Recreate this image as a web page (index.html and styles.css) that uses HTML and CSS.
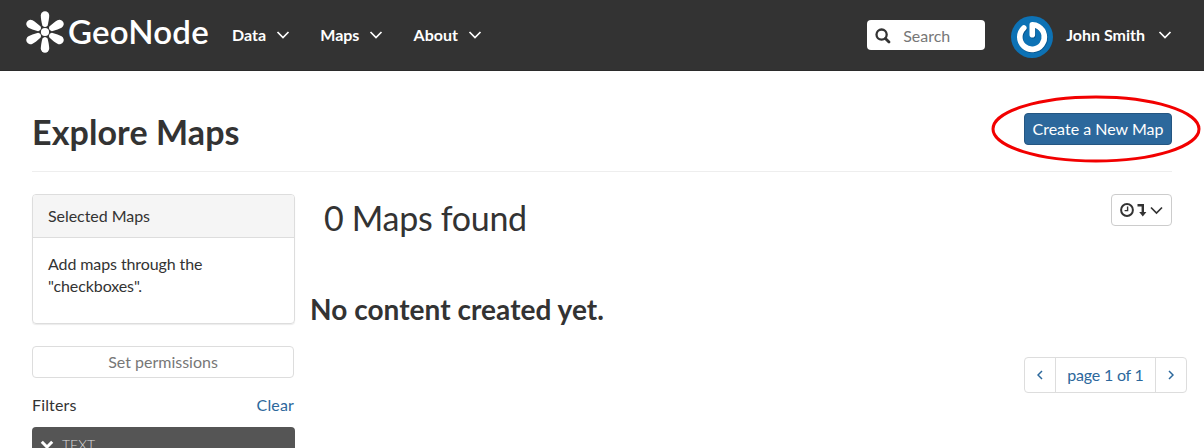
FILE: index.html
```html
<!DOCTYPE html>
<html lang="en">
<head>
<meta charset="utf-8">
<title>Explore Maps - GeoNode</title>
<link rel="stylesheet" href="styles.css">
</head>
<body>
<header class="navbar">
  <a class="brand">
    <svg class="brand-mark" width="40" height="44" viewBox="0 0 40 44" fill="#fff">
      <circle cx="20" cy="22" r="4.1"/>
      <path id="petal" d="M17.4 15.6Q15.8 9 15.8 5.4A4.2 4.2 0 0 1 24.2 5.4Q24.2 9 22.6 15.6Q20 18.6 17.4 15.6Z"/>
      <use href="#petal" transform="rotate(61 20 22)"/>
      <use href="#petal" transform="rotate(119 20 22)"/>
      <use href="#petal" transform="rotate(180 20 22)"/>
      <use href="#petal" transform="rotate(241 20 22)"/>
      <use href="#petal" transform="rotate(299 20 22)"/>
    </svg>
    <span class="brand-name">GeoNode</span>
  </a>
  <nav class="menu">
    <a class="menu-item">Data <svg class="chevron" width="14" height="8" viewBox="0 0 14 8"><path d="M1.5 1L7 6.5L12.5 1"/></svg></a>
    <a class="menu-item">Maps <svg class="chevron" width="14" height="8" viewBox="0 0 14 8"><path d="M1.5 1L7 6.5L12.5 1"/></svg></a>
    <a class="menu-item">About <svg class="chevron" width="14" height="8" viewBox="0 0 14 8"><path d="M1.5 1L7 6.5L12.5 1"/></svg></a>
  </nav>
  <div class="search">
    <svg width="16" height="16" viewBox="0 0 16 16" fill="none" stroke="#333"><circle cx="6.6" cy="6.6" r="5.1" stroke-width="2.3"/><path d="M10.4 10.4L14 14" stroke-width="2.8" stroke-linecap="round"/></svg>
    <span>Search</span>
  </div>
  <svg class="avatar" width="42" height="42" viewBox="0 0 42 42" fill="none" stroke-linecap="round" stroke-linejoin="round">
    <circle cx="21" cy="21" r="21" fill="#0d72b5"/>
    <path d="M12.8 12A12.3 12.3 0 1 0 27.5 10.6Q24.5 8.7 21.3 8.8V18.8" stroke="#07568f" stroke-width="5.6" transform="translate(.7 .9)"/>
    <path d="M12.8 12A12.3 12.3 0 1 0 27.5 10.6Q24.5 8.7 21.3 8.8V18.8" stroke="#fff" stroke-width="5.6"/>
  </svg>
  <a class="user">John Smith <svg class="chevron" width="14" height="8" viewBox="0 0 14 8"><path d="M1.5 1L7 6.5L12.5 1"/></svg></a>
</header>
<main class="page">
  <div class="page-header">
    <h1>Explore Maps</h1>
    <div class="create">
      <a class="btn-primary">Create a New Map</a>
      <svg class="highlight" width="210" height="70" viewBox="0 0 210 70"><ellipse cx="105" cy="35" rx="103" ry="32" fill="none" stroke="#f20000" stroke-width="3"/></svg>
    </div>
  </div>
  <div class="columns">
    <aside class="sidebar">
      <section class="panel">
        <div class="panel-heading">Selected Maps</div>
        <div class="panel-body">Add maps through the "checkboxes".</div>
      </section>
      <button class="permissions">Set permissions</button>
      <div class="filters"><span>Filters</span><a>Clear</a></div>
      <div class="filter-head">
        <svg width="14" height="10" viewBox="0 0 14 10"><path d="M1.8 1.8L7 7L12.2 1.8" fill="none" stroke="#fff" stroke-width="3"/></svg>
        <span>TEXT</span>
      </div>
    </aside>
    <section class="results">
      <div class="results-top">
        <h2>0 Maps found</h2>
        <a class="sort">
          <svg width="43" height="16" viewBox="0 0 43 16" fill="none" stroke="#333"><circle cx="7" cy="8" r="5.9" stroke-width="2"/><path d="M7.6 4.5V8.6H4.6" stroke-width="1.4"/><path d="M17.5 3.2H22.8V11" stroke-width="2.4"/><path d="M19.2 10H26.4L22.8 14.4Z" fill="#333" stroke="none"/><path d="M31 5.5L36.5 11L42 5.5" stroke-width="1.7"/></svg>
        </a>
      </div>
      <h3>No content created yet.</h3>
      <div class="pager">
        <a class="step"><svg width="6" height="10" viewBox="0 0 6 10"><path d="M5 1L1 5L5 9"/></svg></a>
        <a class="current">page 1 of 1</a>
        <a class="step"><svg width="6" height="10" viewBox="0 0 6 10"><path d="M1 1L5 5L1 9"/></svg></a>
      </div>
    </section>
  </div>
</main>
</body>
</html>
```
FILE: styles.css
```css
* { box-sizing: border-box; }
body { margin: 0; height: 448px; overflow: hidden; background: #fff; color: #333; font: 16px/22px Lato, sans-serif; }
svg { display: block; flex: none; }
h1, h2, h3 { margin: 0; }
.navbar { height: 71px; display: flex; align-items: center; padding: 0 32px 0 25px; background: #333; border-bottom: 1px solid #2b2b2b; color: #fff; }
.brand { display: flex; width: 207px; height: 44px; margin-bottom: 6px; }
.brand-name { font-size: 33px; font-weight: 600; line-height: 43px; margin-left: 3px; letter-spacing: .2px; }
.menu { display: flex; gap: 30.2px; }
.menu-item, .user { display: flex; align-items: center; gap: 10px; font-weight: 700; white-space: nowrap; }
.user { gap: 13px; }
.chevron { fill: none; stroke: #fff; stroke-width: 1.7; }
.search { display: flex; align-items: center; gap: 12px; width: 118px; height: 30px; margin-left: auto; padding: 2px 9px 0 8px; background: #fff; border-radius: 4px; color: #777; }
.avatar { margin: 3px 13px 0 26px; }
.page { padding: 0 32px; }
.page-header { display: flex; justify-content: space-between; height: 101px; padding-top: 42px; border-bottom: 1px solid #eee; }
h1 { font-size: 34px; line-height: 38px; font-weight: 700; letter-spacing: .1px; }
.create { position: relative; }
.btn-primary { display: block; width: 148px; height: 32px; border: 1px solid #245682; border-radius: 4px; background: #2c689c; color: #fff; line-height: 29px; text-align: center; white-space: nowrap; }
.highlight { position: absolute; left: -33px; top: -19px; }
.columns { display: flex; padding-top: 22px; }
.sidebar { width: 263px; flex: none; }
.panel { height: 130px; border: 1px solid #ddd; border-radius: 4px; box-shadow: 0 1px 1px rgba(0,0,0,.08); overflow: hidden; }
.panel-heading { height: 43px; padding: 10px 15px; background: #f5f5f5; border-bottom: 1px solid #ddd; letter-spacing: -.05px; }
.panel-body { padding: 15px 80px 0 15px; letter-spacing: -.1px; }
.permissions { display: block; width: 262px; height: 32px; margin-top: 22px; padding: 0; border: 1px solid #ddd; border-radius: 4px; background: #fff; color: #777; font: inherit; }
.filters { display: flex; justify-content: space-between; width: 262px; padding: 16px 0 11px; letter-spacing: .15px; }
.filters a { color: #2c689c; }
.filter-head { display: flex; gap: 8px; align-items: center; height: 35px; padding-left: 8px; background: #555; border-radius: 4px 4px 0 0; color: #ddd; font-size: 14px; font-weight: 300; }
.results { flex: 1; padding-left: 15px; margin-right: -15px; }
.results-top { display: flex; justify-content: space-between; padding: 0 15px 0 14px; }
h2 { font-size: 34px; line-height: 48px; font-weight: 400; letter-spacing: -.3px; }
.sort { display: flex; align-items: center; width: 61px; height: 32px; padding-left: 8px; border: 1px solid #ccc; border-radius: 4px; }
h3 { margin-top: 51px; font-size: 28px; line-height: 32px; font-weight: 700; letter-spacing: .04px; }
.pager { display: flex; width: 163px; height: 36px; margin: 32px 0 0 auto; border: 1px solid #ddd; border-radius: 4px; color: #2c689c; line-height: 34px; }
.pager svg { fill: none; stroke: #2c689c; stroke-width: 1.5; }
.step { width: 30px; display: flex; align-items: center; justify-content: center; }
.current { flex: 1; border: solid #ddd; border-width: 0 1px; text-align: center; white-space: nowrap; letter-spacing: -.2px; }
```
